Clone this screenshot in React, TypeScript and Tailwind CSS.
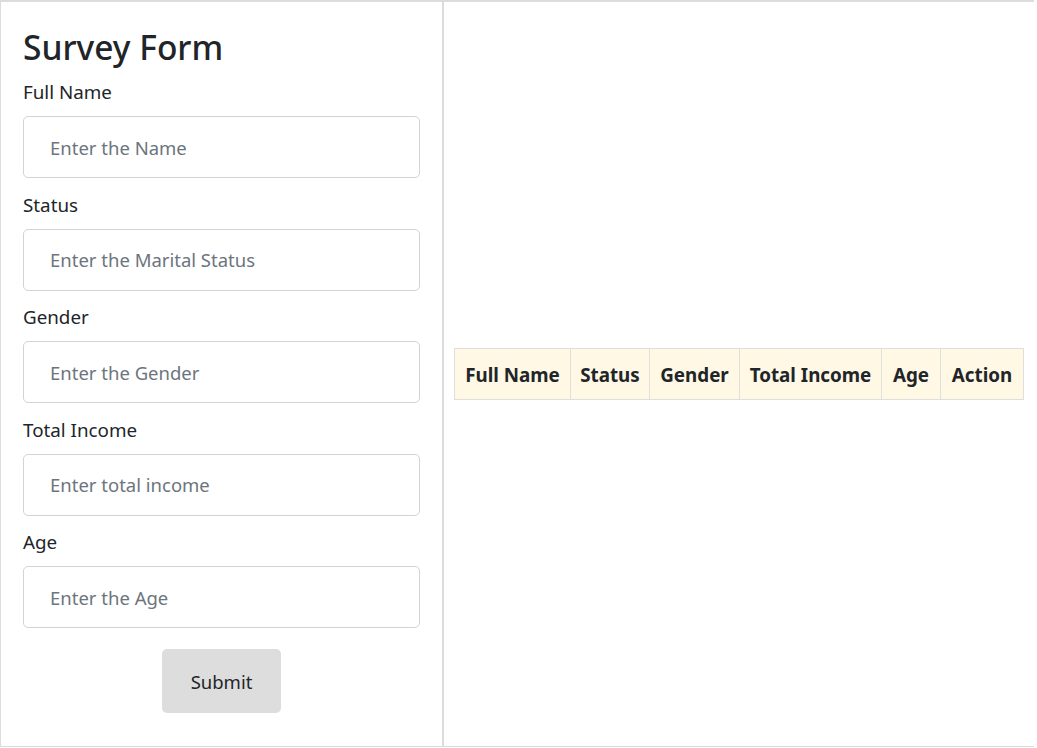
import React from "react";

const fields = [
  { label: "Full Name", ph: "Enter the Name" },
  { label: "Status", ph: "Enter the Marital Status" },
  { label: "Gender", ph: "Enter the Gender" },
  { label: "Total Income", ph: "Enter total income" },
  { label: "Age", ph: "Enter the Age" },
];

const cols = [
  { t: "Full Name", w: "w-[116px]" },
  { t: "Status", w: "w-[79px]" },
  { t: "Gender", w: "w-[90px]" },
  { t: "Total Income", w: "w-[142px]" },
  { t: "Age", w: "w-[59px]" },
  { t: "Action", w: "w-[83px]" },
];

export default function App() {
  return (
    <div
      className="flex w-[1034px] h-[747px] border-t-2 border-l border-b border-[#dcdcdc] bg-white text-[#212529]"
      style={{ fontFamily: '"Noto Sans", "Open Sans", sans-serif' }}
    >
      <div className="w-[443px] shrink-0 border-r-2 border-[#dcdcdc] pl-[22px] pr-[22px] flex flex-col">
        <h2 className="mt-[22px] h-[46px] leading-[46px] text-[33.5px] font-medium">Survey Form</h2>
        {fields.map((f, i) => (
          <div key={i} className={`flex flex-col ${i === 0 ? "mt-[8px]" : "mt-[12.5px]"}`}>
            <label className="h-[28px] leading-[28px] text-[18.8px]">{f.label}</label>
            <input
              placeholder={f.ph}
              className="mt-[10px] h-[62px] w-full rounded-[5px] border border-[#ced4da] pl-[26px] text-[18.5px] placeholder:text-[#6c757d] outline-none"
            />
          </div>
        ))}
        <div className="flex justify-center mt-[21px]">
          <button className="w-[119px] h-[64px] pt-[2px] rounded-[5px] bg-[#dddddd] text-[18.5px] text-[#212529]">
            Submit
          </button>
        </div>
      </div>
      <div className="flex-1 flex items-center pl-[10px]">
        <table className="table-fixed border-collapse">
          <thead>
            <tr className="bg-[#fff8e5]">
              {cols.map((c) => (
                <th
                  key={c.t}
                  className={`${c.w} h-[51px] border border-[#dfdfdf] text-[18.8px] font-bold text-center whitespace-nowrap p-0 pt-[2px]`}
                >
                  {c.t}
                </th>
              ))}
            </tr>
          </thead>
        </table>
      </div>
    </div>
  );
}
